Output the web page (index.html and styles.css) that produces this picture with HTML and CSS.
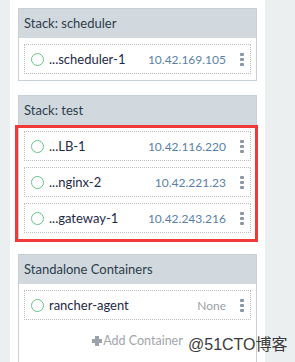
FILE: index.html
```html
<!DOCTYPE html>
<html>
<head>
<meta charset="utf-8">
<link rel="stylesheet" href="styles.css">
</head>
<body>
<div class="page">
  <div class="gutter-left"></div>
  <main class="main">
    <section class="card">
      <header class="card-head">Stack: scheduler</header>
      <div class="card-body">
        <div class="row">
          <span class="status"></span>
          <span class="name">...scheduler-1</span>
          <span class="ip">10.42.169.105</span>
          <span class="kebab"><i></i><i></i><i></i></span>
        </div>
      </div>
    </section>

    <section class="card">
      <header class="card-head">Stack: test</header>
      <div class="card-body">
        <div class="row">
          <span class="status"></span>
          <span class="name">...LB-1</span>
          <span class="ip">10.42.116.220</span>
          <span class="kebab"><i></i><i></i><i></i></span>
        </div>
        <div class="row">
          <span class="status"></span>
          <span class="name">...nginx-2</span>
          <span class="ip">10.42.221.23</span>
          <span class="kebab"><i></i><i></i><i></i></span>
        </div>
        <div class="row">
          <span class="status"></span>
          <span class="name">...gateway-1</span>
          <span class="ip">10.42.243.216</span>
          <span class="kebab"><i></i><i></i><i></i></span>
        </div>
        <div class="redbox"></div>
      </div>
    </section>

    <section class="card last">
      <header class="card-head">Standalone Containers</header>
      <div class="card-body">
        <div class="row">
          <span class="status"></span>
          <span class="name">rancher-agent</span>
          <span class="ip none">None</span>
          <span class="kebab"><i></i><i></i><i></i></span>
        </div>
        <div class="add"><span class="plus"></span>Add Container</div>
      </div>
    </section>
    <div class="watermark">@51CTO博客</div>
  </main>
  <div class="gutter-right"></div>
</div>
</body>
</html>
```
FILE: styles.css
```css
html, body {
  margin: 0;
  padding: 0;
  height: 100%;
  background: #eceff0;
}
body {
  font-family: Lato, "Noto Sans", sans-serif;
  overflow: hidden;
}
.page {
  display: flex;
  height: 362px;
}
.gutter-left {
  width: 10px;
  background: #eceff0;
}
.gutter-right {
  flex: 1;
  background: #eceff0;
}
.main {
  position: relative;
  width: 255px;
  background: #ffffff;
  padding: 8px 8px 0 8px;
  box-sizing: border-box;
  display: flex;
  flex-direction: column;
  gap: 14px;
}
.card {
  border: 1px solid #c9d0d5;
  background: #fff;
}
.card.last {
  flex: 1;
  border-bottom: none;
}
.card-head {
  height: 29px;
  background: #d2d9de;
  color: #2c3c4c;
  font-size: 13px;
  line-height: 29px;
  padding-left: 5px;
}
.card-body {
  position: relative;
  padding: 6px 5px;
  display: flex;
  flex-direction: column;
  gap: 6px;
}
.row {
  box-sizing: border-box;
  height: 30px;
  border: 1px dotted #bdbdbd;
  display: flex;
  align-items: center;
  padding-left: 6px;
  padding-right: 6px;
}
.status {
  width: 11px;
  height: 11px;
  border: 1px solid #6cc08a;
  border-radius: 50%;
  flex: none;
}
.name {
  margin-left: 5px;
  font-size: 13px;
  color: #1d2a48;
  flex: 1;
}
.ip {
  font-size: 12px;
  color: #5b7fa6;
}
.ip.none {
  color: #9aa0a6;
}
.kebab {
  width: 18px;
  display: flex;
  flex-direction: column;
  align-items: flex-end;
  gap: 2px;
}
.kebab i {
  display: block;
  width: 4px;
  height: 3px;
  border-radius: 1px;
  background: #8a98a6;
}
.redbox {
  position: absolute;
  left: -4px;
  right: -2px;
  top: 0;
  bottom: -3px;
  border: 3px solid #f03a3a;
  pointer-events: none;
}
.add {
  margin-top: 7px;
  font-size: 12.5px;
  color: #a1a6ab;
  display: flex;
  justify-content: center;
  align-items: center;
}
.plus {
  position: relative;
  width: 10px;
  height: 10px;
  margin-right: 1px;
}
.plus::before, .plus::after {
  content: "";
  position: absolute;
  background: #9aa3ab;
}
.plus::before {
  left: 3px;
  top: 0;
  width: 4px;
  height: 10px;
}
.plus::after {
  left: 0;
  top: 3px;
  width: 10px;
  height: 4px;
}
.watermark {
  position: absolute;
  left: 178px;
  top: 331px;
  font-family: "Liberation Sans", "Noto Sans CJK SC", sans-serif;
  font-size: 16px;
  color: #3a3a3a;
  white-space: nowrap;
}
```
